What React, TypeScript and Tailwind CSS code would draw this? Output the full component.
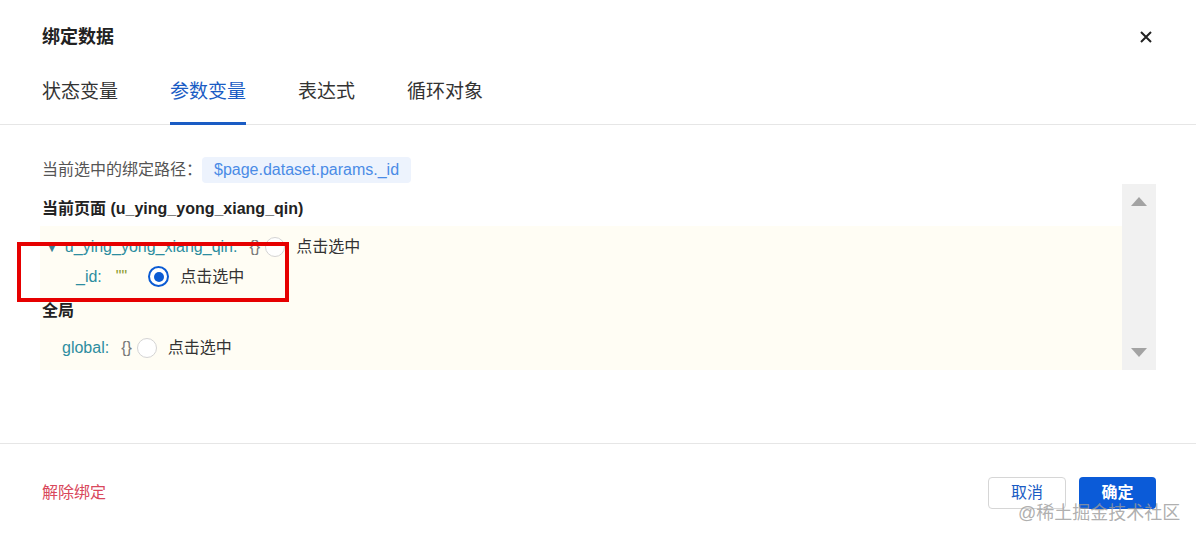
import React from 'react';

function Radio({ checked }: { checked?: boolean }) {
  if (checked) {
    return (
      <span className="flex h-[21px] w-[21px] items-center justify-center rounded-full border-2 border-[#0b5bd3] bg-white">
        <span className="h-[10px] w-[10px] rounded-full bg-[#0b5bd3]" />
      </span>
    );
  }
  return <span className="block h-[20px] w-[20px] rounded-full border border-[#d4d4d4] bg-white" />;
}

const tabs = ['状态变量', '参数变量', '表达式', '循环对象'];

export default function App() {
  return (
    <div className="relative h-[541px] w-[1196px] overflow-hidden bg-white font-['Liberation_Sans','Noto_Sans_CJK_SC',sans-serif] text-[#333]">
      {/* header */}
      <div className="flex items-center justify-between pl-[42px] pr-[44px] pt-[25px]">
        <h2 className="text-[18px] font-bold leading-[24px] text-[#222]">绑定数据</h2>
        <svg width="12" height="12" viewBox="0 0 12 12" className="text-[#222]">
          <path d="M1 1L11 11M11 1L1 11" stroke="currentColor" strokeWidth="2" />
        </svg>
      </div>

      {/* tabs */}
      <div className="mt-[30px] flex gap-[52px] border-b border-[#e6e6e6] px-[42px]">
        {tabs.map((t, i) => (
          <div
            key={t}
            className={
              i === 1
                ? '-mb-px border-b-[3px] border-[#1a5cc4] pb-[17px] text-[19px] leading-[26px] text-[#1a5cc4]'
                : '-mb-px border-b-[3px] border-transparent pb-[17px] text-[19px] leading-[26px] text-[#333]'
            }
          >
            {t}
          </div>
        ))}
      </div>

      {/* body */}
      <div className="h-[318px] px-[40px] pt-[32px] text-[16px]">
        <div className="flex h-[26px] items-center pl-[2px]">
          <span className="text-[#555]">当前选中的绑定路径：</span>
          <span className="flex h-[26px] items-center rounded-[4px] bg-[#edf3fd] px-[12px] text-[#4a8be6]">
            $page.dataset.params._id
          </span>
        </div>

        <div className="mt-px flex h-[186px]">
          <div className="flex-1 pl-[2px]">
            <div className="flex h-[42px] items-end pb-[5px] font-bold text-[#222]">
              当前页面 (u_ying_yong_xiang_qin)
            </div>
            <div className="-ml-[2px] h-[144px] bg-[#fffdf4] pl-[2px] pt-[6px]">
              <div className="flex h-[30px] items-center">
                <span className="ml-[3px] text-[14px] text-[#3e7f93]">▼</span>
                <span className="ml-[6px] text-[#2d8da0]">u_ying_yong_xiang_qin:</span>
                <span className="ml-[12px] text-[#777]">{'{}'}</span>
                <span className="ml-[5px]">
                  <Radio />
                </span>
                <span className="ml-[11px] text-[#333]">点击选中</span>
              </div>
              <div className="flex h-[29px] items-center">
                <span className="ml-[34px] text-[#2d8da0]">_id:</span>
                <span className="ml-[14px] text-[#8a9a2e]">""</span>
                <span className="ml-[21px]">
                  <Radio checked />
                </span>
                <span className="ml-[11px] text-[#333]">点击选中</span>
              </div>
              <div className="flex h-[36px] items-end pb-[4px] font-bold text-[#222]">全局</div>
              <div className="flex h-[42px] items-center">
                <span className="ml-[20px] text-[#2d8da0]">global:</span>
                <span className="ml-[12px] text-[#777]">{'{}'}</span>
                <span className="ml-[5px]">
                  <Radio />
                </span>
                <span className="ml-[11px] text-[#333]">点击选中</span>
              </div>
            </div>
          </div>
          {/* scrollbar */}
          <div className="flex w-[34px] flex-col items-center justify-between bg-[#f1f1f1] py-[13px]">
            <svg width="16" height="9" viewBox="0 0 16 9">
              <path d="M8 0L16 9H0Z" fill="#a3a3a3" />
            </svg>
            <svg width="16" height="9" viewBox="0 0 16 9">
              <path d="M0 0H16L8 9Z" fill="#a3a3a3" />
            </svg>
          </div>
        </div>
      </div>

      {/* footer */}
      <div className="flex items-center justify-between border-t border-[#e6e6e6] px-[40px] pt-[33px] text-[16px]">
        <span className="pl-[2px] text-[#d9485c]">解除绑定</span>
        <div className="flex gap-[13px]">
          <button className="h-[32px] w-[78px] rounded-[4px] border border-[#d6d6d6] bg-white text-[#1a5cc4]">
            取消
          </button>
          <button className="h-[32px] w-[77px] rounded-[4px] bg-[#0b5bd8] font-bold text-white">
            确定
          </button>
        </div>
      </div>

      {/* annotation */}
      <div className="absolute left-[17px] top-[242px] h-[60px] w-[272px] border-[4px] border-[#e60000]" />

      {/* watermark */}
      <div className="absolute left-[1018px] top-[501px] text-[18px] leading-[24px] text-[#9a9a9a]/80">
        @稀土掘金技术社区
      </div>
    </div>
  );
}
